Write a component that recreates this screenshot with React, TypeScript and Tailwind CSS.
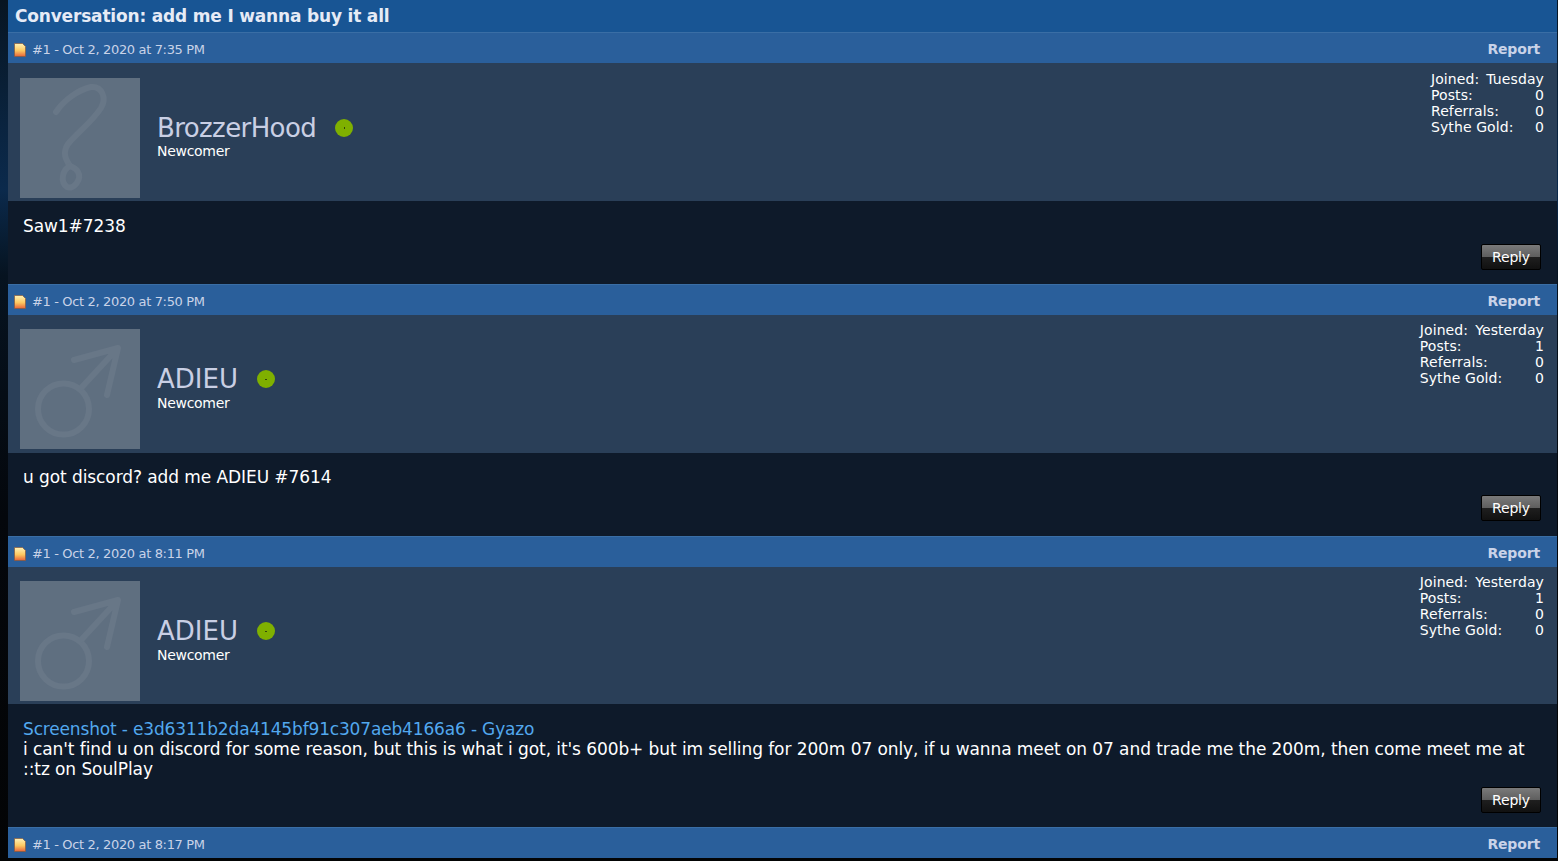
import { ReactNode } from 'react';

const QuestionAvatar = () => (
  <svg viewBox="0 0 120 120" className="h-[120px] w-[120px] shrink-0 bg-[#5f6f80]">
    <path d="M36 34 C44 22 58 12 71 9 C82 8 87 20 81 30 C72 44 58 54 48 66 C42 75 46 82 50 88" fill="none" stroke="#687787" strokeWidth="6" strokeLinecap="round" />
    <path d="M50 88 C42 92 40 104 47 109 C54 112 62 101 58 94 C56 90 52 89 50 88 Z" fill="none" stroke="#687787" strokeWidth="6" />
  </svg>
);

const MaleAvatar = () => (
  <svg viewBox="0 0 120 120" className="h-[120px] w-[120px] shrink-0 bg-[#5f6f80]">
    <circle cx="43.5" cy="80" r="25.5" fill="none" stroke="#687787" strokeWidth="6" />
    <path d="M62 58 L97 20 M54 31 L98 19 L87 66" fill="none" stroke="#687787" strokeWidth="6" strokeLinecap="round" strokeLinejoin="round" />
  </svg>
);

const PostIcon = () => (
  <svg viewBox="0 0 12 14" className="mr-[6px] h-[14px] w-[12px] shrink-0">
    <defs>
      <linearGradient id="post-icon" x1="0" y1="0" x2="0" y2="1">
        <stop offset="0" stopColor="#fff3b8" />
        <stop offset="0.55" stopColor="#fdc860" />
        <stop offset="1" stopColor="#e8643a" />
      </linearGradient>
    </defs>
    <path d="M0.5 0.5 H8.5 L11.5 3.5 V13.5 H0.5 Z" fill="url(#post-icon)" stroke="#8a5a3c" strokeWidth="0.7" />
  </svg>
);

const PostHeader = ({ date }: { date: string }) => (
  <div className="flex h-[31px] items-center justify-between border-t border-[#3a6ea5] bg-[#2a5f9b] pl-[6px] pr-[17px] pt-[3px] text-[13px] text-[#c9d3e8]">
    <div className="flex items-center tracking-[-0.35px]">
      <PostIcon />
      <span>{date}</span>
    </div>
    <a className="text-[14px] font-bold tracking-[-0.15px] text-[#c9d3e8]">Report</a>
  </div>
);

const StatRow = ({ label, value }: { label: string; value: string }) => (
  <div className="flex h-[16px] justify-between gap-[7px] leading-[16px]">
    <span>{label}</span>
    <span>{value}</span>
  </div>
);

const Post = ({ date, name, nameClass, rankClass, joined, posts, avatar, userClass, bodyClass, replyClass, dotInner, children }: {
  date: string;
  name: string;
  nameClass: string;
  rankClass: string;
  joined: string;
  posts: string;
  avatar: ReactNode;
  userClass: string;
  bodyClass: string;
  replyClass: string;
  dotInner: string;
  children: ReactNode;
}) => (
  <div>
    <PostHeader date={date} />
    <div className={`flex justify-between bg-[#2a3f58] pl-[12px] pr-[13px] ${userClass}`}>
      <div className="flex">
        {avatar}
        <div className="ml-[17px] pt-[31px]">
          <div className="flex items-center">
            <span className={`text-[26px] leading-[38px] text-[#c9cfe4] ${nameClass}`}>{name}</span>
            <span className="ml-[19px] flex h-[18px] w-[18px] items-center justify-center rounded-full bg-[#7fb000]">
              <span className={`bg-[#33470a] ${dotInner}`} />
            </span>
          </div>
          <div className={`text-[14px] leading-[18px] tracking-[-0.3px] text-white ${rankClass}`}>Newcomer</div>
        </div>
      </div>
      <div className="-mt-[7px] flex h-fit w-fit flex-col text-[14px] tracking-[0.1px] text-white">
        <StatRow label="Joined:" value={joined} />
        <StatRow label="Posts:" value={posts} />
        <StatRow label="Referrals:" value="0" />
        <StatRow label="Sythe Gold:" value="0" />
      </div>
    </div>
    <div className={`flex flex-col bg-[#0e1a2a] pl-[15px] pr-[16px] text-[17px] leading-[20px] tracking-[-0.08px] text-white ${bodyClass}`}>
      <div className="flex-1">{children}</div>
      <div className="flex justify-end">
        <button className={`h-[26px] w-[60px] rounded-[2px] border border-black bg-[linear-gradient(#7a7a7a_0%,#5e5e5e_50%,#1f1f1f_50%,#111111_100%)] text-[14px] leading-[24px] tracking-[-0.2px] text-white ${replyClass}`}>Reply</button>
      </div>
    </div>
  </div>
);

export default function App() {
  return (
    <div className="h-[861px] w-full overflow-hidden bg-[linear-gradient(#071522_0%,#0a2440_15%,#0b2a4c_22%,#061320_32%,#04070c_60%,#030405_100%)] pl-[8px] pr-[1px] font-['DejaVu_Sans',sans-serif]">
      <div className="flex h-[32px] items-center bg-[#185594] pl-[7px] pt-[1px] text-[17px] font-bold tracking-[-0.18px] text-[#e6ebf6]">
        Conversation: add me I wanna buy it all
      </div>
      <Post date="#1 - Oct 2, 2020 at 7:35 PM" name="BrozzerHood" nameClass="tracking-[-0.6px]" rankClass="-mt-[5px]" joined="Tuesday" posts="0" avatar={<QuestionAvatar />} userClass="h-[138px] pt-[15px]" bodyClass="h-[83px] pt-[15px]" replyClass="mb-[14px]" dotInner="h-[2px] w-[1px]">
        Saw1#7238
      </Post>
      <Post date="#1 - Oct 2, 2020 at 7:50 PM" name="ADIEU" nameClass="tracking-normal" rankClass="-mt-[4px]" joined="Yesterday" posts="1" avatar={<MaleAvatar />} userClass="h-[138px] pt-[14px]" bodyClass="h-[83px] pt-[14px]" replyClass="mb-[15px]" dotInner="h-[1px] w-[2px]">
        u got discord? add me ADIEU #7614
      </Post>
      <Post date="#1 - Oct 2, 2020 at 8:11 PM" name="ADIEU" nameClass="tracking-normal" rankClass="-mt-[4px]" joined="Yesterday" posts="1" avatar={<MaleAvatar />} userClass="h-[137px] pt-[14px]" bodyClass="h-[123px] pt-[15px]" replyClass="mb-[14px]" dotInner="h-[1px] w-[2px]">
        <a className="tracking-[-0.16px] text-[#52a8ee]">Screenshot - e3d6311b2da4145bf91c307aeb4166a6 - Gyazo</a>
        <br />
        i can't find u on discord for some reason, but this is what i got, it's 600b+ but im selling for 200m 07 only, if u wanna meet on 07 and trade me the 200m, then come meet me at ::tz on SoulPlay
      </Post>
      <PostHeader date="#1 - Oct 2, 2020 at 8:17 PM" />
    </div>
  );
}
